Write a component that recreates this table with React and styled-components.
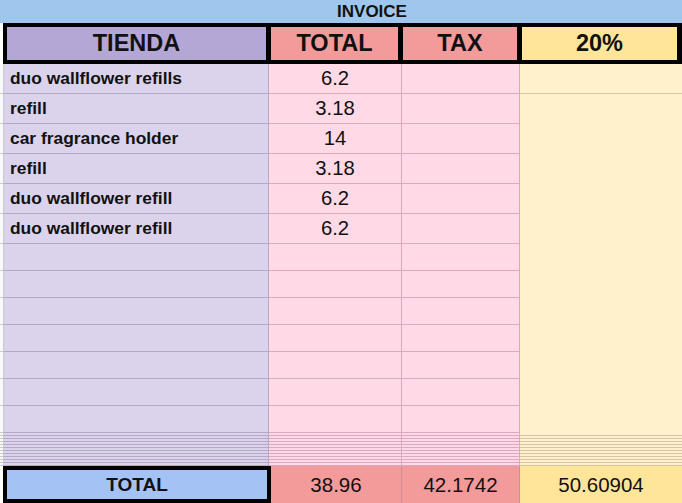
import React from 'react'
import styled, { createGlobalStyle } from 'styled-components'

const GlobalStyle = createGlobalStyle`
  html, body {
    margin: 0;
    padding: 0;
    background: #fff;
  }
`

const COLS = {
  gutter: { bg: '#f9f9f9', line: '#c9c9c9' },
  tienda: { bg: '#dbd3ec', line: '#b6a7c9' },
  total: { bg: '#ffd9e6', line: '#d8a9bf' },
  tax: { bg: '#ffd9e6', line: '#d8a9bf' },
  pct: { bg: '#fff1cc', line: '#d9c3a2' },
}

const Sheet = styled.div`
  width: 682px;
  height: 503px;
  overflow: hidden;
  display: flex;
  flex-direction: column;
  font-family: "Liberation Sans", Arial, sans-serif;
  color: #111;
`

const TitleBar = styled.div`
  height: 23px;
  flex: none;
  background: #9fc6ec;
  display: flex;
  align-items: center;
  justify-content: center;
  padding-left: 62px;
  font-size: 17px;
  font-weight: bold;
`

const HeaderRow = styled.div`
  height: 41px;
  flex: none;
  display: flex;
`

const HeaderGutter = styled.div`
  width: 3px;
  background: #fff;
`

const HeaderGrid = styled.div`
  flex: 1;
  background: #000;
  display: grid;
  grid-template-columns: 259px 127px 114px 1fr;
  column-gap: 5px;
  padding: 4px 5px 4px 4px;
`

const HeadCell = styled.div`
  background: ${p => p.$bg};
  display: flex;
  align-items: center;
  justify-content: center;
  font-size: 23.5px;
  font-weight: bold;
`

const Row = styled.div`
  flex: none;
  height: ${p => p.$h}px;
  display: grid;
  grid-template-columns: 4px 265px 133px 118px 1fr;
`

const Cell = styled.div`
  box-sizing: border-box;
  background: ${p => p.$c.bg};
  border-bottom: ${p => (p.$line ? `1px solid ${p.$c.line}` : 'none')};
  border-right: ${p => (p.$edge ? `1px solid ${p.$c.line}` : 'none')};
  display: flex;
  align-items: center;
  justify-content: ${p => (p.$left ? 'flex-start' : 'center')};
  padding-left: ${p => (p.$left ? '6px' : '0')};
  font-size: ${p => (p.$left ? '17.4px' : '20.3px')};
  font-weight: ${p => (p.$left ? 'bold' : 'normal')};
  white-space: nowrap;
  overflow: hidden;
`

const Footer = styled.div`
  flex: 1;
  display: grid;
  grid-template-columns: 3px 268px 131px 118px 1fr;
`

const FootLabel = styled.div`
  box-sizing: border-box;
  background: #a4c2f4;
  border: 4px solid #000;
  display: flex;
  align-items: center;
  justify-content: center;
  font-size: 19px;
  font-weight: bold;
`

const FootCell = styled.div`
  box-sizing: border-box;
  background: ${p => p.$bg};
  border-right: ${p => (p.$edge ? '1px solid #d88c8f' : 'none')};
  display: flex;
  align-items: center;
  justify-content: center;
  font-size: 20.5px;
`

const items = [
  ['duo wallflower refills', '6.2'],
  ['refill', '3.18'],
  ['car fragrance holder', '14'],
  ['refill', '3.18'],
  ['duo wallflower refill', '6.2'],
  ['duo wallflower refill', '6.2'],
]

const DataRow = ({ h, name = '', total = '', pctLine }) => (
  <Row $h={h}>
    <Cell $c={COLS.gutter} $line $edge />
    <Cell $c={COLS.tienda} $line $edge $left>{name}</Cell>
    <Cell $c={COLS.total} $line $edge>{total}</Cell>
    <Cell $c={COLS.tax} $line $edge />
    <Cell $c={COLS.pct} $line={pctLine} />
  </Row>
)

export default function App() {
  return (
    <>
      <GlobalStyle />
      <Sheet>
        <TitleBar>INVOICE</TitleBar>
        <HeaderRow>
          <HeaderGutter />
          <HeaderGrid>
            <HeadCell $bg="#b4a7d6">TIENDA</HeadCell>
            <HeadCell $bg="#f39a9a">TOTAL</HeadCell>
            <HeadCell $bg="#f39a9a">TAX</HeadCell>
            <HeadCell $bg="#ffe599">20%</HeadCell>
          </HeaderGrid>
        </HeaderRow>
        {items.map(([name, total], i) => (
          <DataRow key={i} h={30} name={name} total={total} pctLine={i === 0} />
        ))}
        {Array.from({ length: 7 }, (_, i) => (
          <DataRow key={'e' + i} h={27} />
        ))}
        {Array.from({ length: 11 }, (_, i) => (
          <DataRow key={'d' + i} h={3} pctLine />
        ))}
        <Footer>
          <HeaderGutter />
          <FootLabel>TOTAL</FootLabel>
          <FootCell $bg="#f39a9a" $edge>38.96</FootCell>
          <FootCell $bg="#f39a9a" $edge>42.1742</FootCell>
          <FootCell $bg="#ffe599">50.60904</FootCell>
        </Footer>
      </Sheet>
    </>
  )
}
